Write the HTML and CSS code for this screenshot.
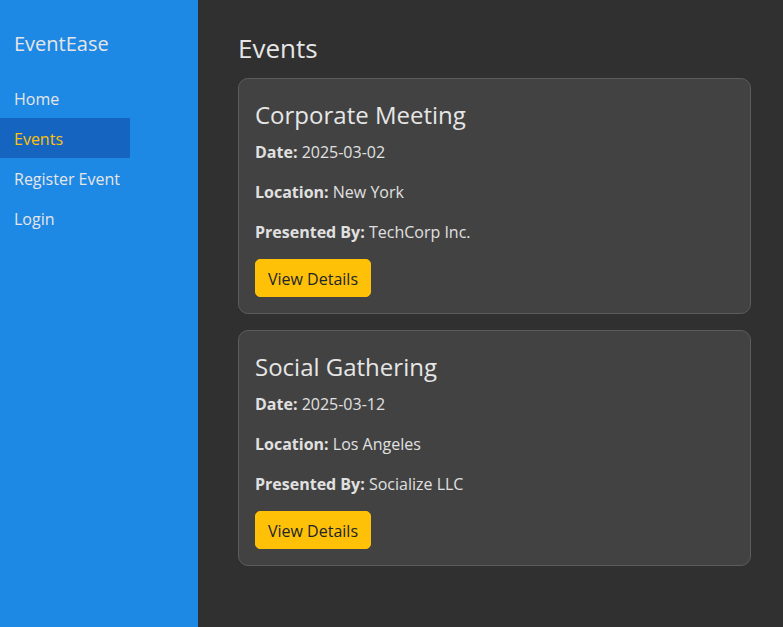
FILE: index.html
```html
<!DOCTYPE html>
<html lang="en">
<head>
<meta charset="utf-8">
<title>EventEase</title>
<link rel="stylesheet" href="styles.css">
</head>
<body>
<div class="layout">
  <aside class="sidebar">
    <div class="brand">EventEase</div>
    <nav class="nav">
      <a class="nav-link" href="#">Home</a>
      <a class="nav-link active" href="#">Events</a>
      <a class="nav-link" href="#">Register Event</a>
      <a class="nav-link" href="#">Login</a>
    </nav>
  </aside>
  <main class="main">
    <h2 class="page-title">Events</h2>
    <div class="card">
      <h3 class="card-title">Corporate Meeting</h3>
      <p class="field"><strong>Date:</strong> 2025-03-02</p>
      <p class="field"><strong>Location:</strong> New York</p>
      <p class="field"><strong>Presented By:</strong> TechCorp Inc.</p>
      <button class="btn">View Details</button>
    </div>
    <div class="card">
      <h3 class="card-title">Social Gathering</h3>
      <p class="field"><strong>Date:</strong> 2025-03-12</p>
      <p class="field"><strong>Location:</strong> Los Angeles</p>
      <p class="field"><strong>Presented By:</strong> Socialize LLC</p>
      <button class="btn">View Details</button>
    </div>
  </main>
</div>
</body>
</html>
```
FILE: styles.css
```css
* { box-sizing: border-box; }
html, body { margin: 0; height: 100%; }
body {
  font-family: "Open Sans", "Noto Sans", sans-serif;
  font-size: 16px;
  line-height: 1.5;
  color: #e0e0e0;
  background: #303030;
}
.layout {
  display: flex;
  min-height: 100%;
}
.sidebar {
  width: 198px;
  flex: none;
  background: #1e88e5;
  padding-top: 31px;
}
.brand {
  font-size: 20px;
  line-height: 26px;
  padding-left: 14px;
  color: #e6e6e6;
  margin-bottom: 21px;
}
.nav {
  display: flex;
  flex-direction: column;
  align-items: flex-start;
}
.nav-link {
  display: block;
  width: 130px;
  height: 40px;
  line-height: 38px;
  padding: 2px 0 0 14px;
  color: #e6e6e6;
  text-decoration: none;
  white-space: nowrap;
}
.nav-link.active {
  background: #1565c0;
  color: #ffc107;
}
.main {
  flex: 1;
  padding: 33px 32px 20px 40px;
}
.page-title {
  margin: 0 0 14px;
  font-size: 26px;
  font-weight: 400;
  line-height: 31px;
  color: #e6e6e6;
}
.card {
  background: #424242;
  border: 1px solid #5c5c5c;
  border-radius: 10px;
  padding: 21px 16px 16px;
  margin-bottom: 16px;
}
.card-title {
  margin: 0 0 10px;
  font-size: 24px;
  font-weight: 400;
  line-height: 30px;
  color: #e6e6e6;
}
.field {
  margin: 0 0 16px;
  line-height: 24px;
  font-size: 16px;
}
.field:last-of-type { margin-bottom: 15px; }
.field strong { font-weight: 700; }
.btn {
  display: block;
  font-family: inherit;
  font-size: 16px;
  line-height: 24px;
  padding: 7px 12px 5px;
  border: 1px solid #ffc107;
  border-radius: 5px;
  background: #ffc107;
  color: #212529;
  cursor: pointer;
}
```
